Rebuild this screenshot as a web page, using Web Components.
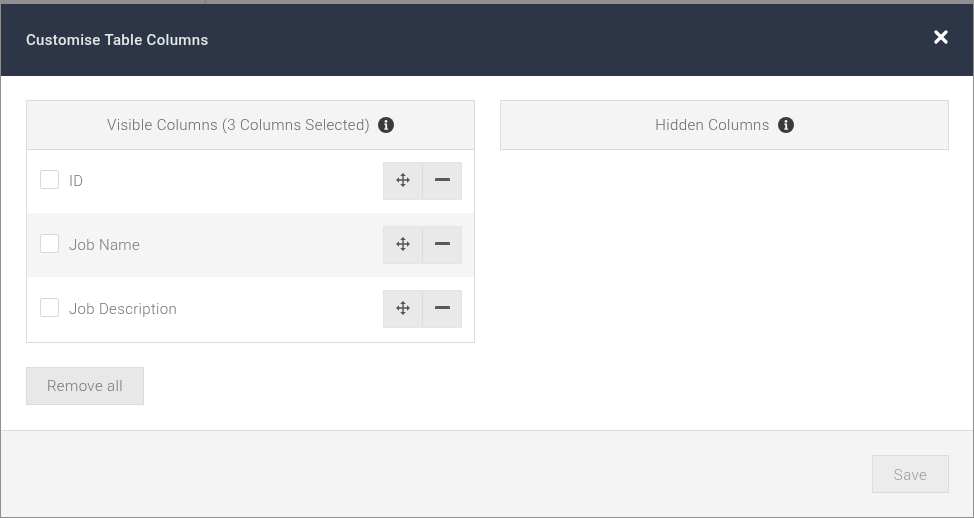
<!DOCTYPE html>
<html>
<head>
<meta charset="utf-8">
<style>
html, body { margin: 0; padding: 0; width: 974px; height: 518px; overflow: hidden; background: #fff; font-family: Roboto, "Liberation Sans", sans-serif; }
</style>
</head>
<body>
<column-modal>
  <span slot="title">Customise Table Columns</span>
  <column-panel slot="left" heading="Visible Columns (3 Columns Selected)">
    <column-row label="ID"></column-row>
    <column-row label="Job Name" shaded></column-row>
    <column-row label="Job Description"></column-row>
  </column-panel>
  <plain-button slot="left-after">Remove all</plain-button>
  <column-panel slot="right" heading="Hidden Columns"></column-panel>
  <plain-button slot="footer" faded>Save</plain-button>
</column-modal>
<script>
const INFO_ICON = `<svg width="16" height="16" viewBox="0 0 16 16"><circle cx="8" cy="8" r="8" fill="#3a3a3a"/><path d="M6.2 6.6h2.9v5h1v1.2H6.2v-1.2h1v-3.8h-1z" fill="#f4f4f4"/><circle cx="8" cy="4.4" r="1.4" fill="#f4f4f4"/></svg>`;

class ColumnModal extends HTMLElement {
    constructor() {
        super();
        this.attachShadow({mode: "open"}).innerHTML = `
        <style>
            :host { display: flex; flex-direction: column; width: 974px; height: 518px; box-sizing: border-box; background: #fff; filter: blur(.35px); }
            .strip { height: 4px; background: linear-gradient(to right, #8f8f8f 205px, #7b7b7b 205px, #7b7b7b 206px, #8f8f8f 206px); }
            .frame { flex: 1; display: flex; flex-direction: column; min-height: 0; border: 1px solid #8f8f8f; border-width: 0 1px 1px; }
            header { height: 72px; background: #2c3646; color: #e8e8e8; display: flex; align-items: center; justify-content: space-between; padding: 0 25px; font-size: 15px; font-weight: 500; letter-spacing: .32px; }
            .close { width: 14px; height: 14px; margin-bottom: 6px; }
            main { flex: 1; display: grid; grid-template-columns: 449px 449px; column-gap: 25px; padding: 24px 25px 0; align-content: start; align-items: start; }
            .after { margin-top: 24px; }
            footer { height: 87px; box-sizing: border-box; background: #f4f4f4; border-top: 1px solid #dcdcdc; display: flex; justify-content: flex-end; padding: 24px 24px 0 0; }
        </style>
        <div class="strip"></div>
        <div class="frame">
            <header>
                <slot name="title"></slot>
                <svg class="close" viewBox="0 0 14 14"><path d="M2 2 L12 12 M12 2 L2 12" stroke="#fff" stroke-width="3.2" stroke-linecap="round"/></svg>
            </header>
            <main>
                <div><slot name="left"></slot><div class="after"><slot name="left-after"></slot></div></div>
                <div><slot name="right"></slot></div>
            </main>
            <footer><slot name="footer"></slot></footer>
        </div>
        `;
    }
}

class ColumnPanel extends HTMLElement {
    constructor() {
        super();
        this.attachShadow({mode: "open"}).innerHTML = `
        <style>
            :host { display: block; }
            .head { height: 50px; box-sizing: border-box; background: #f4f4f4; border: 1px solid #dcdcdc; display: flex; align-items: center; justify-content: center; gap: 8px; font-size: 15px; font-weight: 300; color: #666; letter-spacing: .36px; }
            .head svg { display: block; }
            .body { border: 1px solid #dcdcdc; border-top: 0; margin-top: -1px; padding-bottom: 1px; }
            .body.empty { display: none; }
        </style>
        <div class="head"><span>${this.getAttribute("heading")}</span>${INFO_ICON}</div>
        <div class="body"><slot></slot></div>
        `;
        if (!this.children.length) this.shadowRoot.querySelector(".body").classList.add("empty");
    }
}

class ColumnRow extends HTMLElement {
    constructor() {
        super();
        this.attachShadow({mode: "open"}).innerHTML = `
        <style>
            :host { display: flex; align-items: center; height: 64px; padding: 0 12px 0 13px; font-size: 15px; font-weight: 300; color: #777; letter-spacing: .33px; }
            :host([shaded]) { background: #f5f5f5; }
            .check { width: 19px; height: 19px; box-sizing: border-box; border: 1px solid #d8d8d8; border-radius: 2px; background: #fff; margin: 0 10px 3px 0; }
            .label { flex: 1; }
            .tools { display: flex; box-sizing: border-box; height: 38px; width: 79px; border: 1px solid #e4e4e4; background: #e9e9e9; }
            .tools div { flex: 1; display: flex; align-items: center; justify-content: center; }
            .tools div:first-child { flex: 0 0 38px; }
            .tools div + div { border-left: 1px solid #dcdcdc; }
            .tools svg { display: block; margin-bottom: 3px; }
        </style>
        <span class="check"></span>
        <span class="label">${this.getAttribute("label")}</span>
        <div class="tools">
            <div><svg width="14" height="14" viewBox="0 0 14 14" fill="#555"><path d="M7 0 L9.8 3 H7.7 V6.3 H11 V4.2 L14 7 L11 9.8 V7.7 H7.7 V11 H9.8 L7 14 L4.2 11 H6.3 V7.7 H3 V9.8 L0 7 L3 4.2 V6.3 H6.3 V3 H4.2 Z"/></svg></div>
            <div><svg width="15" height="3" viewBox="0 0 15 3"><rect width="15" height="3" rx=".6" fill="#5a5a5a"/></svg></div>
        </div>
        `;
    }
}

class PlainButton extends HTMLElement {
    constructor() {
        super();
        this.attachShadow({mode: "open"}).innerHTML = `
        <style>
            :host { display: inline-flex; align-items: center; justify-content: center; box-sizing: border-box; height: 38px; width: 118px; background: #e8e8e8; border: 1px solid #dcdcdc; font-size: 15px; font-weight: 300; color: #777; letter-spacing: .4px; }
            :host([faded]) { width: 77px; padding-top: 2px; color: #999; background: #ececec; }
        </style>
        <slot></slot>
        `;
    }
}

customElements.define("column-modal", ColumnModal);
customElements.define("column-panel", ColumnPanel);
customElements.define("column-row", ColumnRow);
customElements.define("plain-button", PlainButton);
</script>
</body>
</html>
